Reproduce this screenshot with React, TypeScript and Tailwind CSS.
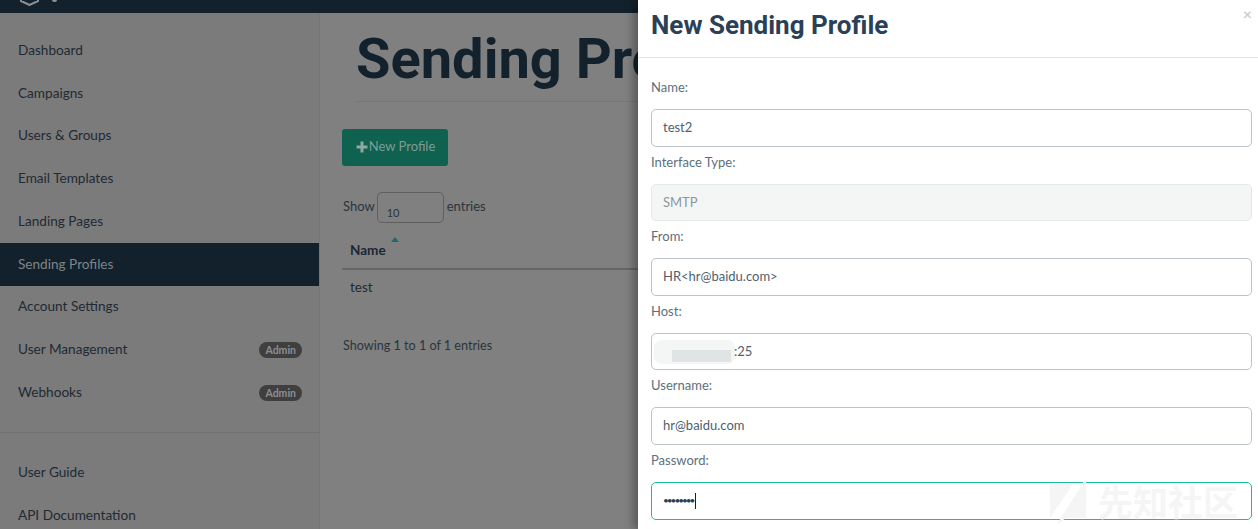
const bodyFont = "font-['Lato','Noto_Sans',sans-serif]"

const navTop = ['Dashboard', 'Campaigns', 'Users & Groups', 'Email Templates', 'Landing Pages', 'Sending Profiles', 'Account Settings', 'User Management', 'Webhooks']
const navBottom = ['User Guide', 'API Documentation']

function NavItem({ label }: { label: string }) {
  const active = label === 'Sending Profiles'
  const admin = label === 'User Management' || label === 'Webhooks'
  return (
    <div className={`flex h-[42.8px] items-center justify-between pr-[17px] pl-[18px] text-[13.6px] ${active ? 'bg-[#12212c] text-[#7f8589]' : 'text-[#1f2a33]'}`}>
      <span className="pb-[1px]">{label}</span>
      {admin && (
        <span className="rounded-full bg-[#3f3f3f] px-[6px] text-[10.5px] leading-[16px] font-bold text-[#8b8f92]">Admin</span>
      )}
    </div>
  )
}

function Field({ label, value, disabled, focused, children }: { label: string; value?: string; disabled?: boolean; focused?: boolean; children?: React.ReactNode }) {
  return (
    <div className="flex flex-col">
      <label className="h-[37px] pt-[5px] text-[13px] leading-[20px] text-[#5d6f7e]">{label}</label>
      <div className={`relative flex h-[37.6px] items-center rounded-[5px] border px-[11px] text-[13px] text-[#4f5f6d] ${disabled ? 'border-[#e6e8e8] bg-[#f4f6f6] text-[#8c969c]' : focused ? 'border-[#1abc9c] bg-white' : 'border-[#bdc3c7] bg-white'}`}>
        {children ?? value}
      </div>
    </div>
  )
}

export default function App() {
  return (
    <div className={`relative h-[529px] w-[1258px] overflow-hidden bg-[#808080] ${bodyFont}`}>
      {/* Top bar */}
      <div className="flex h-[13px] items-start bg-[#12212c] pl-[20px]">
        <svg width="19" height="6" viewBox="0 0 19 6" className="text-[#8a8f93]">
          <path d="M1 0 L1 1 L9.5 5 L18 1 L18 0" fill="none" stroke="currentColor" strokeWidth="2" />
        </svg>
        <span className="ml-[13px] h-[2px] w-[5px] rounded-b-full bg-[#8a8f93]" />
      </div>

      <div className="flex h-[516px]">
        {/* Sidebar */}
        <aside className="w-[320px] shrink-0 border-r border-[#767676] bg-[#7b7b7b] pt-[16px]">
          {navTop.map((item) => (
            <NavItem key={item} label={item} />
          ))}
          <div className="mt-[18px] mb-[18px] border-t border-[#727272]" />
          {navBottom.map((item) => (
            <NavItem key={item} label={item} />
          ))}
        </aside>

        {/* Page behind the modal */}
        <main className="w-[318px] shrink-0 overflow-hidden pl-[22px]">
          <div className="ml-[14px] h-[89px] border-b border-[#777777]">
            <h1 className="pt-[13px] font-['Roboto',sans-serif] text-[56px] leading-[66px] font-bold whitespace-nowrap text-[#12212c]">Sending Profiles</h1>
          </div>
          <button className="mt-[27px] flex h-[37px] w-[106px] items-center justify-center gap-[1px] rounded-[3px] bg-[#0f6150] pb-[2px] pl-[1px] text-[13px] text-[#7f9c95]">
            <svg width="12" height="12" viewBox="0 0 12 12" fill="#8fa8a2">
              <path d="M4.5 0.5h3v4h4v3h-4v4h-3v-4h-4v-3h4z" />
            </svg>
            New Profile
          </button>
          <div className="mt-[26px] flex items-center pl-[1px] text-[13px] text-[#2a353e]">
            <span className="pb-[2px]">Show</span>
            <span className="mr-[3px] ml-[2px] h-[31px] w-[67px] rounded-[5px] border border-[#5f5f5f] pt-[12px] pl-[9px] text-[11px] leading-[16px]">10</span>
            <span className="pb-[2px]">entries</span>
          </div>
          <div className="relative mt-[14px] h-[33px] border-b-2 border-[#666666] pl-[8px] text-[13.5px] leading-[27px] font-bold text-[#1b2633]">
            Name
            <span className="absolute top-0 left-[49px] h-0 w-0 border-x-[4.5px] border-b-[5px] border-x-transparent border-b-[#1a6a70]" />
          </div>
          <div className="h-[37px] pl-[8px] text-[13.5px] leading-[35px] text-[#1f2a33]">test</div>
          <div className="mt-[29px] pl-[1px] text-[12.6px] leading-[20px] text-[#2a353e]">Showing 1 to 1 of 1 entries</div>
        </main>
      </div>

      {/* Modal */}
      <div className="absolute top-0 right-0 bottom-0 left-[638px] bg-white shadow-[-5px_0_8px_rgba(0,0,0,0.3)]">
        <div className="relative h-[58px] border-b border-[#e5e5e5] pt-[8px] pl-[13px]">
          <h2 className="font-['Roboto',sans-serif] text-[26px] leading-[34px] font-bold text-[#2a4058]">New Sending Profile</h2>
          <span className="absolute top-[6px] right-[6px] text-[16px] leading-[16px] font-bold text-[#cfcfcf]">×</span>
        </div>
        <div className="ml-[13px] w-[601px] pt-[14px]">
          <Field label="Name:" value="test2" />
          <Field label="Interface Type:" value="SMTP" disabled />
          <Field label="From:" value="HR<hr@baidu.com>" />
          <Field label="Host:">
            <span className="absolute top-[6px] left-[2px] h-[24px] w-[81px] rounded-[8px] bg-[#f4f5f5]" />
            <span className="absolute top-[16px] left-[20px] h-[12px] w-[59px] bg-[#e1e4e5]" />
            <span className="relative ml-[71px]">:25</span>
          </Field>
          <Field label="Username:" value="hr@baidu.com" />
          <Field label="Password:" focused>
            <span className="text-[10px] tracking-[-2px] text-[#2c3e50]">••••••••</span>
            <span className="ml-[2px] h-[16px] w-[1px] bg-[#12212c]" />
          </Field>
        </div>
      </div>

      {/* Watermark */}
      <div className="absolute top-[478px] left-[1050px] flex items-center gap-[12px] text-[#f5f5f5]">
        <svg width="36" height="46" viewBox="0 0 36 46" fill="currentColor">
          <path d="M0 6h23L0 40z" />
          <path d="M36 0L7 46h1l8-6h20z" />
        </svg>
        <span className="font-['Noto_Sans_CJK_SC',sans-serif] text-[35px] leading-[40px] font-bold">先知社区</span>
      </div>
    </div>
  )
}
